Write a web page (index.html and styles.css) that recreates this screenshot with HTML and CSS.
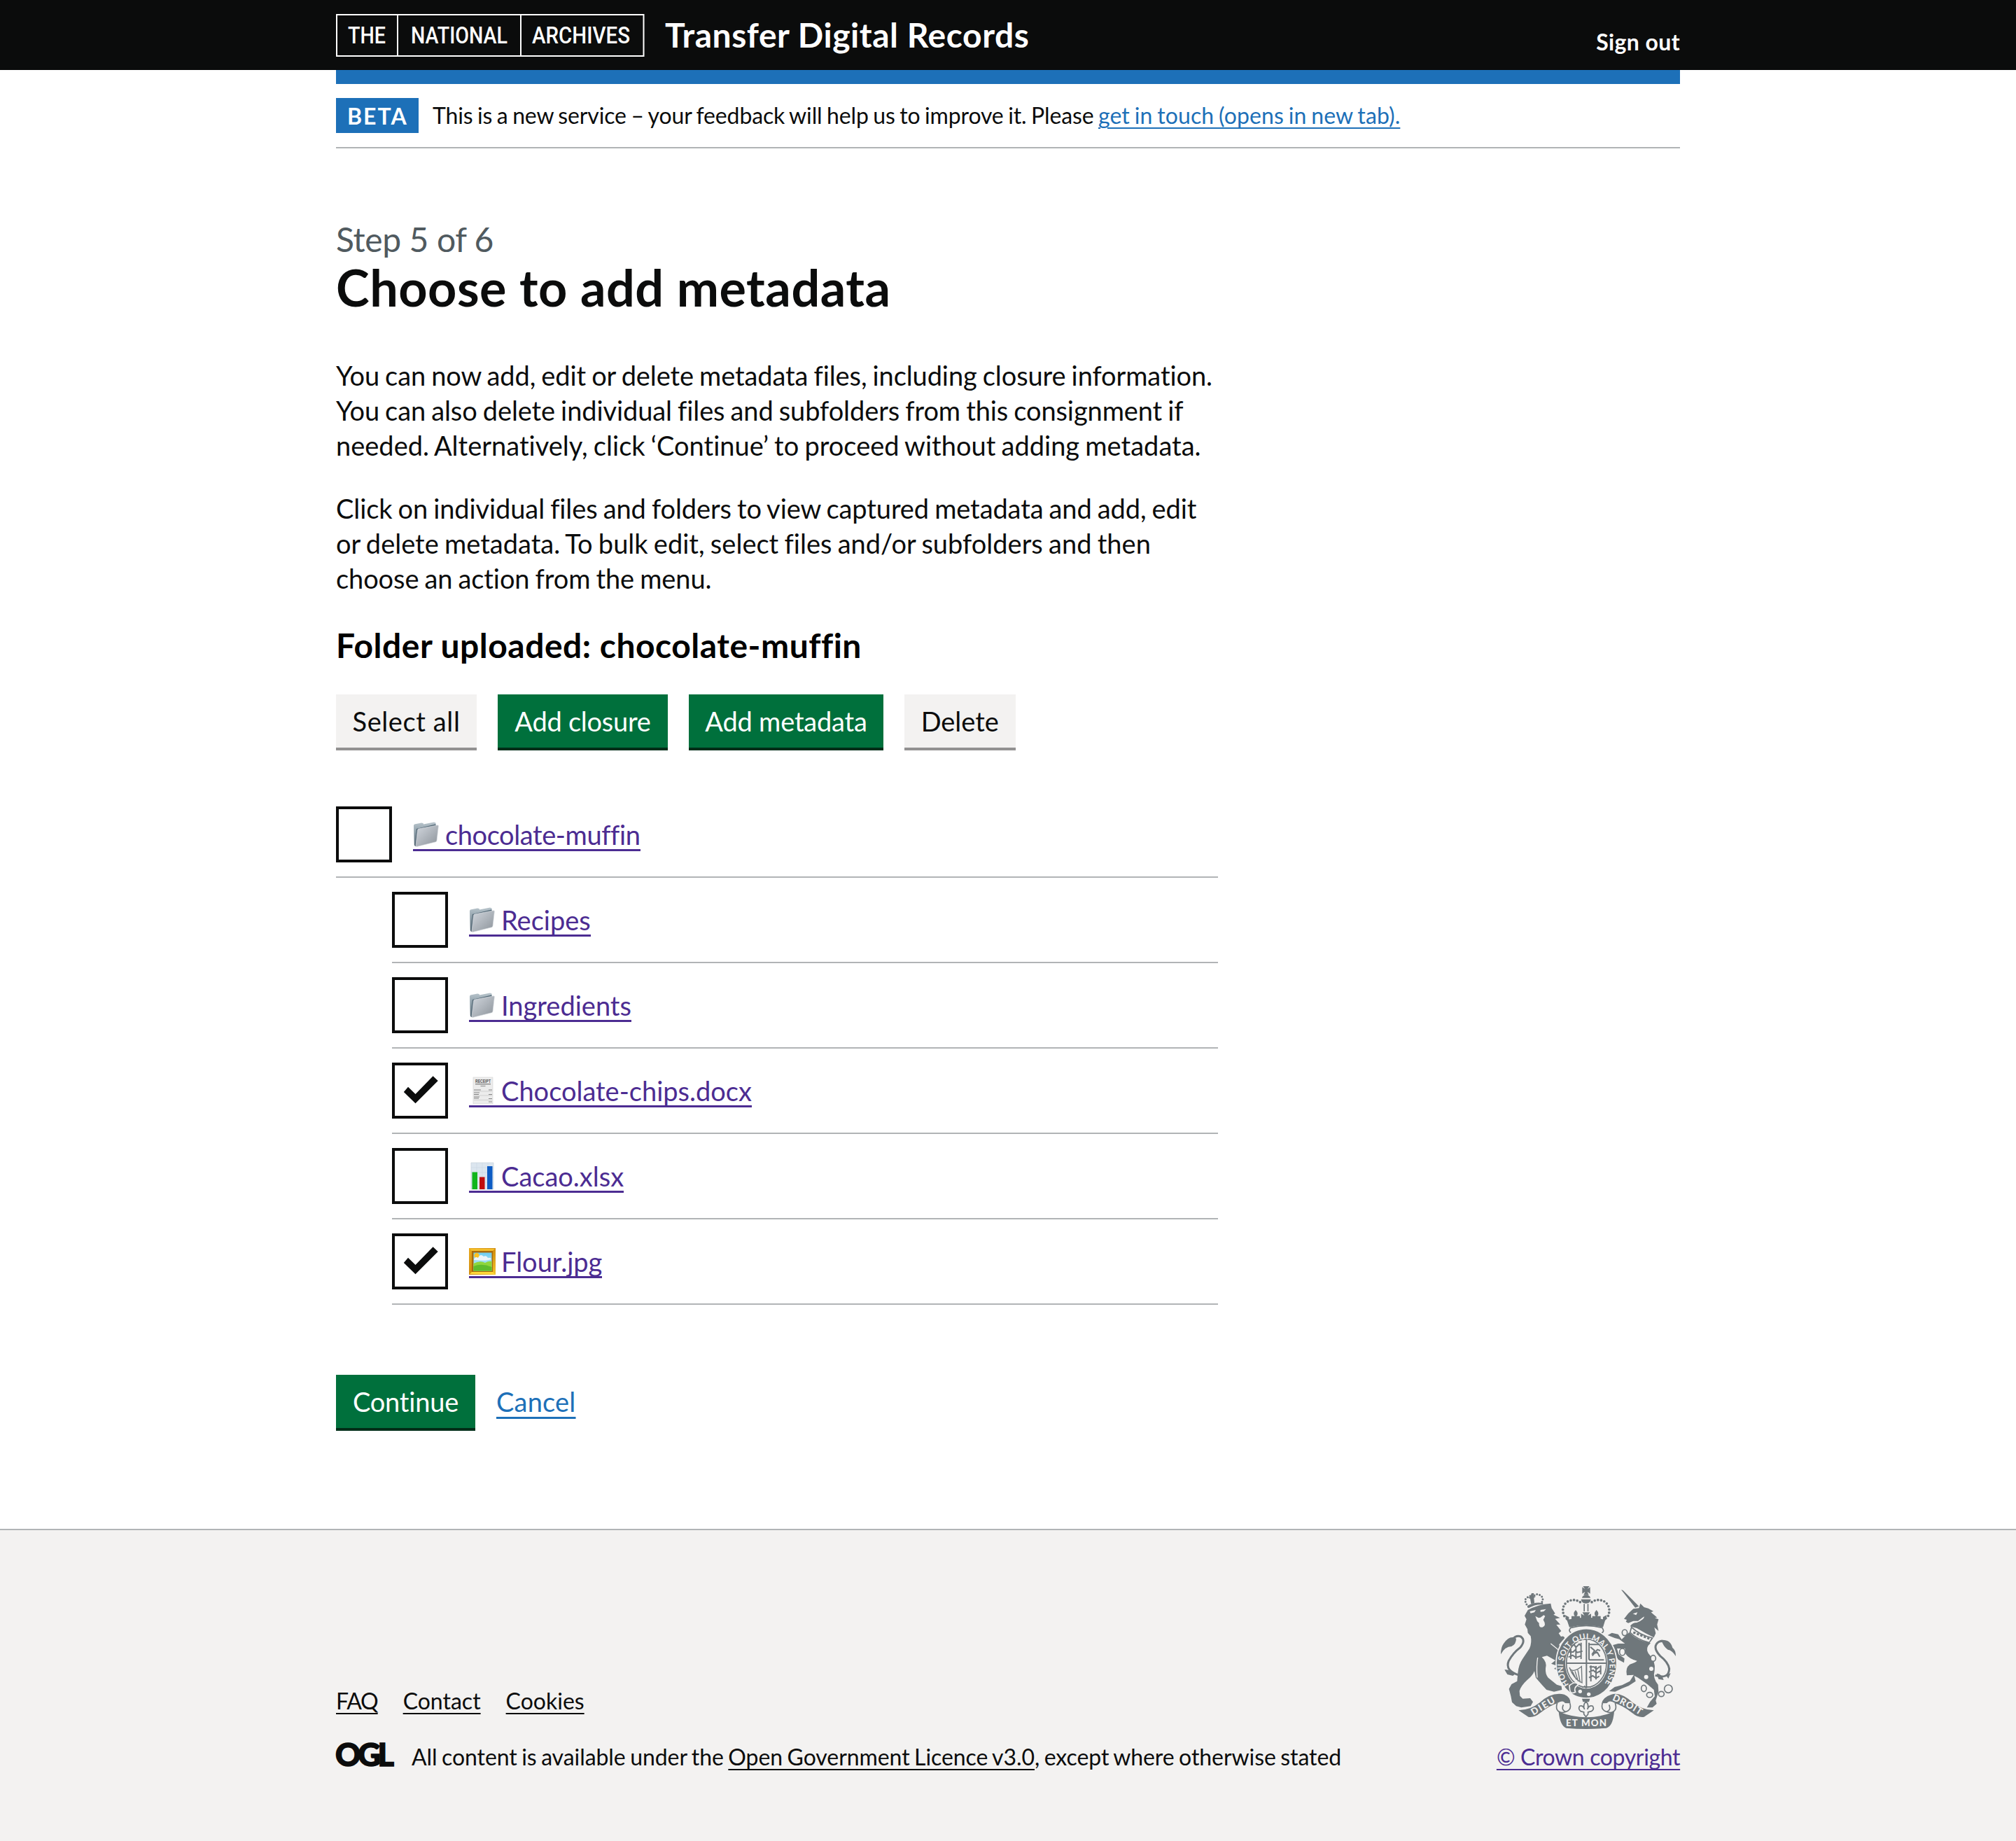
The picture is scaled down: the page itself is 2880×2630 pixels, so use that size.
FILE: index.html
```html
<!DOCTYPE html>
<html lang="en">
<head>
<meta charset="utf-8">
<title>Choose to add metadata – Transfer Digital Records</title>
<link rel="stylesheet" href="styles.css">
</head>
<body>
<svg class="sprite" aria-hidden="true">
  <defs>
    <linearGradient id="folder-front" x1="0" y1="0" x2="1" y2="1"><stop offset="0" stop-color="#d3d8df"/><stop offset="1" stop-color="#8b9299"/></linearGradient>
    <linearGradient id="folder-back" x1="0" y1="0" x2="0" y2="1"><stop offset="0" stop-color="#b9c5cc"/><stop offset=".4" stop-color="#8fa0aa"/><stop offset="1" stop-color="#4d5f6c"/></linearGradient>
    <linearGradient id="sky" x1="0" y1="0" x2="0" y2="1"><stop offset="0" stop-color="#6fcdf0"/><stop offset="1" stop-color="#c9effa"/></linearGradient>
    <linearGradient id="gold" x1="0" y1="0" x2="1" y2="1"><stop offset="0" stop-color="#e9a91d"/><stop offset=".5" stop-color="#d08d10"/><stop offset="1" stop-color="#f4c52b"/></linearGradient>
    <symbol id="icon-folder" viewBox="0 0 38 40">
      <path d="M1 7 L2 5.500 L12 3.500 L14.500 4 L15 5.500 L30 2.500 L32.500 3.500 L33 8 L5 36 L3 37 L1.800 35 Z" fill="url(#folder-back)"/>
      <path d="M5 12 L32 5.500 L33 8 L8 36 L3 37 Z" fill="#4f6472"/>
      <path d="M6.500 13.500 Q6.700 12.300 8 12 L35 6.800 Q36.600 6.600 36.400 8.200 L34 29 Q33.800 30.300 32.500 30.700 L5.500 37.500 Q3.800 37.800 4 36 Z" fill="url(#folder-front)" stroke="#dfe3e8" stroke-width=".6"/>
    </symbol>
    <symbol id="icon-receipt" viewBox="0 0 38 40">
      <path d="M6 1 H34 V39 H6 Z" fill="#ececec" stroke="#d9d9d9" stroke-width=".7"/>
      <text x="20" y="8.800" text-anchor="middle" textLength="22" lengthAdjust="spacingAndGlyphs" class="receipt-title">RECEIPT</text>
      <path d="M9 10.700 H31" stroke="#777" stroke-width="1.200"/>
      <path d="M16.500 13.500 H23.500" stroke="#999" stroke-width="1.300"/>
      <path d="M7 19 H17 M28 19 H33 M7 23 H15 M7 25.500 H14 M28 25.500 H33 M7 29 H15 M7 31 H14 M28 31.500 H33 M28 36 H33" stroke="#858585" stroke-width="1.200"/>
      <path d="M7 21 H33 M7 27 H33 M7 33.500 H33" stroke="#c4c4c4" stroke-width=".7"/>
    </symbol>
    <symbol id="icon-chart" viewBox="0 0 38 40">
      <path d="M3 1 H35 V39 H3 Z" fill="#dce6ef" stroke="#c5d1db" stroke-width=".7"/>
      <path d="M3 8 H35 M3 15 H35 M3 22 H35 M3 29 H35 M11 1 V39 M19 1 V39 M27 1 V39" stroke="#ccd9e5" stroke-width=".7"/>
      <path d="M4.500 14.500 H12 V39 H4.500 Z" fill="#10b51c"/>
      <path d="M15 21.500 H22.500 V39 H15 Z" fill="#c00d0d"/>
      <path d="M26 6 H33.500 V39 H26 Z" fill="#0d5cc4"/>
    </symbol>
    <symbol id="icon-picture" viewBox="0 0 38 40">
      <path d="M0 1 H38 V39 H0 Z" fill="url(#gold)"/>
      <path d="M1 2 H37 L33 6 H5 Z" fill="#f3bd2a"/>
      <path d="M1 38 H37 L33 34 H5 Z" fill="#ffd83c"/>
      <path d="M4 5 H34 V35 H4 Z" fill="#a8690b"/>
      <path d="M6.500 7.500 H32.500 V33.500 H6.500 Z" fill="url(#sky)"/>
      <circle cx="11" cy="11.500" r="3.600" fill="#ffc21f"/>
      <path d="M7 17 Q9 12 13 15 Q16 8 21 13 Q25 11 27 15 Q31 14 32 17 Q25 20 7 18 Z" fill="#eef4f8"/>
      <path d="M6.500 23 Q16 18 23 22 Q28 19 32.500 20 V33.500 H6.500 Z" fill="#8fd63c"/>
      <path d="M6.500 27 Q18 22 32.500 28 V33.500 H6.500 Z" fill="#5ebc2c"/>
    </symbol>
  </defs>
</svg>

<header class="header">
  <div class="container header-inner">
    <div class="brand">
      <svg class="brand-logo" viewBox="0 0 441 61" role="img" aria-label="The National Archives">
        <path d="M1 1 H439.500 V60 H1 Z M88 1 V60 M264 1 V60" fill="none" stroke="#fff" stroke-width="2"/>
        <text x="17" y="42" textLength="54" lengthAdjust="spacingAndGlyphs">THE</text>
        <text x="107" y="42" textLength="138" lengthAdjust="spacingAndGlyphs">NATIONAL</text>
        <text x="280" y="42" textLength="140" lengthAdjust="spacingAndGlyphs">ARCHIVES</text>
      </svg>
      <span class="brand-title">Transfer Digital Records</span>
    </div>
    <a class="sign-out">Sign out</a>
  </div>
</header>

<div class="container">
  <div class="phase-banner">
    <strong class="tag">BETA</strong>
    <span class="phase-text">This is a new service – your feedback will help us to improve it. Please <a class="link phase-link">get in touch (opens in new tab).</a></span>
  </div>

  <main class="main">
    <span class="caption">Step 5 of 6</span>
    <h1 class="heading">Choose to add metadata</h1>
    <p class="body-text">You can now add, edit or delete metadata files, including closure information.<br>You can also delete individual files and subfolders from this consignment if<br><span class="loose">needed. Alternatively, click ‘Continue’ to proceed without adding metadata.</span></p>
    <p class="body-text">Click on individual files and folders to view captured metadata and add, edit<br><span class="loose">or delete metadata. To bulk edit, select files and/or subfolders and then</span><br>choose an action from the menu.</p>
    <h2 class="subheading">Folder uploaded: chocolate-muffin</h2>

    <div class="actions">
      <button class="button button-secondary select-all">Select all</button>
      <button class="button add-closure">Add closure</button>
      <button class="button add-metadata">Add metadata</button>
      <button class="button button-secondary delete">Delete</button>
    </div>

    <ul class="tree">
      <li class="row">
        <span class="checkbox"></span>
        <a class="file tight"><svg class="icon"><use href="#icon-folder"/></svg>chocolate-muffin</a>
      </li>
      <li class="row nested">
        <span class="checkbox"></span>
        <a class="file"><svg class="icon"><use href="#icon-folder"/></svg>Recipes</a>
      </li>
      <li class="row nested">
        <span class="checkbox"></span>
        <a class="file"><svg class="icon"><use href="#icon-folder"/></svg>Ingredients</a>
      </li>
      <li class="row nested">
        <span class="checkbox"><svg class="tick" viewBox="0 0 72 72"><path d="M12.800 38 L19 30.700 L29.500 41 L54.600 15.300 L61.700 22 L29.500 54.300 Z"/></svg></span>
        <a class="file"><svg class="icon"><use href="#icon-receipt"/></svg>Chocolate-chips.docx</a>
      </li>
      <li class="row nested">
        <span class="checkbox"></span>
        <a class="file"><svg class="icon"><use href="#icon-chart"/></svg>Cacao.xlsx</a>
      </li>
      <li class="row nested">
        <span class="checkbox"><svg class="tick" viewBox="0 0 72 72"><path d="M12.800 38 L19 30.700 L29.500 41 L54.600 15.300 L61.700 22 L29.500 54.300 Z"/></svg></span>
        <a class="file"><svg class="icon"><use href="#icon-picture"/></svg>Flour.jpg</a>
      </li>
    </ul>

    <div class="actions form-end">
      <button class="button continue">Continue</button>
      <a class="link cancel">Cancel</a>
    </div>
  </main>
</div>

<footer class="footer">
  <div class="container footer-inner">
    <div class="footer-meta">
      <div class="footer-links"><a class="link faq">FAQ</a><a class="link">Contact</a><a class="link">Cookies</a></div>
      <div class="licence">
        <svg class="ogl" viewBox="0 0 82 34" role="img" aria-label="OGL"><text x="-1" y="33" textLength="84" lengthAdjust="spacing">OGL</text></svg>
        <span class="licence-text">All content is available under the <a class="link">Open Government Licence v3.0</a>, except where otherwise stated</span>
      </div>
    </div>
    <div class="crown">
      <svg class="arms" viewBox="72 48 750 612" role="img" aria-label="Royal coat of arms">
        <!-- crown -->
        <g class="ink">
          <path d="M424 48 h28 l-9 12 12 -8 v28 l-12 -8 6 14 h-22 l6 -14 -12 8 v-28 l12 8 Z"/>
          <path d="M420 98 q2 -12 18 -12 q16 0 18 12 Z M416 104 h42 q-2 18 -21 18 q-19 0 -21 -18 Z M427 124 h5 v32 h-5 Z M443 124 h5 v32 h-5 Z"/>
          <path d="M355 192 Q438 172 520 192 L510 224 Q438 206 366 224 Z"/>
          <path d="M393 150 q14 14 4 26 h14 v16 h-36 v-16 h14 q-10 -12 4 -26 Z M482 150 q14 14 4 26 h14 v16 h-36 v-16 h14 q-10 -12 4 -26 Z M422 160 h32 l-9 14 14 -8 v28 h-43 v-28 l14 8 Z M348 172 l16 8 v20 l-12 -8 Z M526 172 l-16 8 v20 l12 -8 Z"/>
        </g>
        <path class="beads" d="M412 116 Q385 98 355 116 Q328 140 344 176 Q352 186 362 190 M462 116 Q490 98 520 116 Q546 140 532 176 Q524 186 514 190"/>
        <path class="outline" d="M372 226 Q438 208 506 226 Q520 244 500 250 Q438 232 376 250 Q358 240 372 226 Z"/>
        <!-- lion -->
        <path class="beads small" d="M190 136 Q166 106 186 96 Q200 84 208 96 Q222 76 240 86 Q260 98 246 120"/>
        <path class="ink" d="M186 132 Q216 114 252 120 L254 127 Q220 124 191 142 Z M204 78 l10 0 l-2 12 10 2 -8 6 2 22 -14 4 -4 -22 -8 -4 8 -6 Z"/>
        <path class="ink" d="M188 150 Q230 126 286 122 L290 142 L305 165 L298 170 L326 184 L305 188 L327 212 L310 213 L331 240 L320 250 L330 264 Q342 260 346 270 L322 298 L330 330 L345 365 L350 402 L325 410 L300 402 L315 390 L288 380 L306 366 L270 346 L248 352 Q272 375 264 400 Q262 425 275 440 L312 470 L332 476 L334 492 L300 500 L268 492 L248 470 L222 440 L216 412 Q208 432 185 450 Q158 475 152 497 L154 518 L166 530 L198 528 L210 544 L200 562 L160 568 L138 562 L120 545 L115 518 L107 488 L118 468 L142 455 L145 420 Q148 385 165 360 L195 315 Q206 290 200 262 L188 248 L186 232 L175 212 L182 190 L174 175 Z"/>
        <path class="paper" d="M196 156 l26 -6 -6 10 -16 4 Z M242 150 l24 -4 -10 10 -14 2 Z M220 176 l14 8 8 -2 14 -10 6 4 -8 16 q16 26 -4 32 q-16 2 -14 -18 l-8 -8 Z"/>
        <path class="paper-line" d="M286 294 Q318 318 342 344 M230 354 Q224 390 228 440"/>
        <path class="tail" d="M152 430 Q88 410 106 368 Q124 334 156 310 Q180 280 158 264 Q138 256 122 276"/>
        <path class="ink" d="M138 272 Q110 256 84 294 Q72 310 72 340 Q90 306 118 306 Q138 296 138 272 Z M88 406 Q108 402 134 424 L124 432 L100 426 Z"/>
        <!-- unicorn -->
        <path class="ink" d="M588 63 L596 66 L664 134 L648 140 Z"/>
        <path class="ink" d="M600 188 L618 165 L640 145 L664 142 L670 122 L686 138 L704 143 L726 155 L716 160 L742 182 L732 184 L748 190 L742 212 L748 240 L730 224 L736 250 L728 268 L690 248 L655 228 L626 220 Q636 204 655 204 Q690 190 686 178 L660 197 L640 197 L618 206 L608 200 L612 192 Z"/>
        <path class="paper" d="M638 166 l20 -6 -6 12 Z"/>
        <path class="ink" d="M622 246 Q660 284 714 292 Q690 312 704 335 Q738 370 731 410 Q722 440 746 470 L748 500 L736 538 L740 552 L722 568 L698 568 L712 543 L732 520 L728 492 L700 468 L660 440 L644 432 L650 455 L620 475 L590 487 L562 500 L536 498 L560 480 L592 472 L625 455 L642 428 L612 430 Q605 398 625 383 Q652 374 656 368 Q620 358 607 338 L604 315 L570 315 L577 340 L602 358 L600 376 L575 362 L560 335 L545 302 L575 294 L604 294 L580 275 L560 270 L530 258 L548 248 L575 254 L590 276 Z"/>
        <path class="outline" d="M632 224 Q668 258 722 270 L708 290 Q655 276 626 246 Z"/>
        <path class="collar" d="M640 246 L716 276"/>
        <path class="tail" d="M734 430 Q792 448 794 402 Q790 374 754 346 Q718 306 750 286 Q772 276 788 300"/>
        <path class="ink" d="M760 278 Q800 276 808 312 Q822 322 822 348 Q806 322 788 320 Q768 306 760 278 Z M740 422 Q764 424 770 450 L748 446 Z M780 430 L800 420 L790 444 Z"/>
        <path class="outline" d="M592 247 a11 13 0 1 0 22 0 a11 13 0 1 0 -22 0 M581 330 a12 15 0 1 0 24 0 a12 15 0 1 0 -24 0 M714 357 a11 13 0 1 0 22 0 a11 13 0 1 0 -22 0 M674 486 a11 14 0 1 0 22 0 a11 14 0 1 0 -22 0 M697 514 a13 11 0 1 0 26 0 a13 11 0 1 0 -26 0 M748 510 a12 11 0 1 0 24 0 a12 11 0 1 0 -24 0 M773 488 a17 17 0 1 0 34 0 a17 17 0 1 0 -34 0"/>
        <path class="paper" d="M708 402 a9 9 0 1 0 18 0 a9 9 0 1 0 -18 0 M686 437 a9 9 0 1 0 18 0 a9 9 0 1 0 -18 0"/>
        <!-- garter and shield -->
        <ellipse class="garter" cx="439" cy="379" rx="130" ry="149"/>
        <ellipse class="paper" cx="439" cy="378" rx="91" ry="109"/>
        <ellipse class="outline" cx="439" cy="378" rx="86" ry="103"/>
        <path class="quarters" d="M439 272 V484 M352 378 H526"/>
        <path class="charges" d="M372 306 l14 -8 8 12 14 -14 10 10 M364 330 h18 l8 -8 10 10 22 -6 M362 352 l18 -8 14 10 24 -8 M372 318 v42 M394 304 v56 M416 290 v70 M450 298 h42 M450 364 h64 M456 308 l18 16 -8 12 20 -4 10 18 M464 346 l22 -26 12 4 M450 290 v74 M452 394 h20 l10 10 14 -12 M450 416 l18 -8 14 12 18 -10 M450 440 l16 -8 14 10 14 -8 M458 388 v68 M480 390 v58 M500 388 v38"/>
        <path class="harp" d="M366 396 Q376 424 418 392 L420 462 Q384 446 366 396 Z M378 412 L396 448 M390 412 L404 456 M402 406 L412 460"/>
        <path class="harp" d="M420 480 h38 M430 474 l8 12"/>
        <path id="garter-line" d="M364 470 A100 117 0 1 1 514 470" fill="none"/>
        <text class="garter-text"><textPath href="#garter-line" startOffset="0" textLength="500" lengthAdjust="spacing">HONI SOIT QUI MAL Y PENSE</textPath></text>
        <circle class="paper" cx="412" cy="499" r="8"/><circle class="paper" cx="449" cy="511" r="8"/>
        <path class="buckle" d="M366 474 Q392 452 404 470 Q382 484 392 502 Q372 512 368 494 Z"/>
        <!-- fleur-de-lis -->
        <path class="ink" d="M420 530 h34 l-4 14 h-26 Z"/>
        <path class="outline" d="M437 542 Q452 558 443 576 Q450 556 466 562 Q474 576 460 584 L446 588 V596 L437 608 L428 596 V588 L414 584 Q402 574 410 562 Q424 556 431 576 Q422 558 437 542 Z"/>
        <!-- scroll -->
        <path class="ink" d="M148 580 Q200 578 240 546 Q290 500 344 512 Q372 524 370 550 L352 556 Q340 530 314 550 Q280 560 240 592 Q216 612 190 608 Z M728 580 Q676 578 636 546 Q586 500 546 512 Q508 524 504 552 L522 556 Q536 530 562 550 Q596 560 636 592 Q660 612 686 608 Z M320 586 Q438 634 558 586 Q552 650 524 656 Q438 664 352 656 Q326 646 320 586 Z"/>
        <path class="outline" d="M314 548 Q302 584 334 590 Q380 584 368 550 M562 548 Q574 584 542 590 Q496 584 508 550 M340 556 Q330 580 350 586 M536 556 Q546 580 526 586"/>
        <path id="left-scroll" d="M212 602 Q262 572 320 538" fill="none"/>
        <path id="right-scroll" d="M548 536 Q610 562 672 604" fill="none"/>
        <text class="motto"><textPath href="#left-scroll" textLength="112">DIEU</textPath></text>
        <text class="motto"><textPath href="#right-scroll" textLength="136">DROIT</textPath></text>
        <text class="motto" x="351" y="649" textLength="174">ET MON</text>
      </svg>
      <a class="link crown-link">© Crown copyright</a>
    </div>
  </div>
</footer>
</body>
</html>
```
FILE: styles.css
```css
* { box-sizing: border-box; }
body {
  margin: 0;
  background: #fff;
  color: #0b0c0c;
  font-family: Lato, "Open Sans", sans-serif;
  font-size: 38px;
  line-height: 50px;
  font-variant-ligatures: none;
  white-space: nowrap;
}
.sprite { position: absolute; width: 0; height: 0; }
.container { width: 1920px; margin: 0 auto; }

/* Header */
.header { height: 100px; background: #0b0c0c; color: #fff; }
.header-inner { display: flex; justify-content: space-between; }
.brand { display: flex; gap: 29px; }
.brand-logo { width: 441px; height: 61px; margin-top: 20px; }
.brand-logo text { font: 500 34px Roboto, sans-serif; fill: #fff; }
.brand-title { padding-top: 20px; font-size: 48px; font-weight: 700; line-height: 60px; letter-spacing: .55px; }
.sign-out { padding-top: 40px; font-size: 32px; font-weight: 700; line-height: 40px; letter-spacing: .4px; }

/* Phase banner */
.phase-banner {
  display: flex;
  gap: 20px;
  padding: 20px 0;
  border-top: 20px solid #1d70b8;
  border-bottom: 2px solid #b1b4b6;
  font-size: 32px;
}
.tag { width: 118px; height: 50px; padding-left: 16px; background: #1d70b8; color: #fff; font-weight: 700; line-height: 51px; letter-spacing: 2px; }
.phase-text { height: 50px; word-spacing: -1.5px; letter-spacing: -.14px; }
.link { color: #1d70b8; text-decoration: underline; text-decoration-thickness: 2px; text-underline-offset: 6px; }
.phase-link { letter-spacing: .1px; text-underline-offset: 5px; }

/* Main */
.main { width: 1260px; padding-top: 100px; }
.caption { display: block; color: #505a5f; font-size: 48px; line-height: 60px; letter-spacing: -.4px; }
.heading { margin: 1px 0 63px; font-size: 72px; font-weight: 700; line-height: 75px; letter-spacing: .5px; }
.body-text { margin: 0 0 40px; word-spacing: -1.5px; letter-spacing: -.1px; }
.loose { letter-spacing: .01px; }
.subheading { margin: 41px 0 40px; color: #000; font-size: 48px; font-weight: 700; line-height: 60px; letter-spacing: .5px; }
.actions { display: flex; gap: 30px; }
.button {
  height: 76px;
  padding: 0;
  border: 0;
  background: #00703c;
  box-shadow: 0 4px 0 #002d18;
  color: #fff;
  font: inherit;
  line-height: 76px;
  text-align: center;
}
.button-secondary { background: #f3f2f1; box-shadow: 0 4px 0 #929191; color: #0b0c0c; }
.select-all { width: 201px; letter-spacing: .6px; }
.add-closure { width: 243px; letter-spacing: -.25px; }
.add-metadata { width: 278px; letter-spacing: -.2px; }
.delete { width: 158.500px; }
.continue { width: 199px; letter-spacing: -.2px; }

/* File tree */
.tree { margin: 84px 0 100px; padding: 0; list-style: none; }
.row { display: flex; gap: 30px; align-items: flex-start; height: 122px; padding-top: 20px; border-bottom: 2px solid #b1b4b6; }
.row:first-child { height: 102px; padding-top: 0; }
.nested { margin-left: 80px; }
.checkbox { width: 80px; height: 80px; border: 4px solid #0b0c0c; }
.tick { display: block; width: 72px; height: 72px; fill: #0b0c0c; }
.file { display: flex; margin-top: 19px; border-bottom: 3px solid #4c2c92; color: #4c2c92; line-height: 42px; }
.tight { letter-spacing: -.4px; }
.icon { width: 38px; height: 40px; margin: 1px 8px 0 0; }
.receipt-title { font: 700 6.5px "Liberation Sans", sans-serif; fill: #555; }
.cancel { line-height: 76px; text-decoration-thickness: 3px; text-underline-offset: 7px; letter-spacing: .2px; }

/* Footer */
.footer { height: 446px; margin-top: 144px; padding-top: 80px; border-top: 2px solid #b1b4b6; background: #f3f2f1; font-size: 32px; line-height: 40px; }
.footer-inner { display: flex; justify-content: space-between; align-items: flex-end; }
.footer .link { color: #0b0c0c; text-decoration-skip-ink: none; text-underline-offset: 5px; }
.footer .crown-link { color: #4c2c92; letter-spacing: -.36px; }
.footer-links { display: flex; gap: 36px; }
.faq { letter-spacing: -1.1px; }
.footer-meta { display: grid; gap: 40px; }
.licence { display: flex; gap: 26px; }
.licence-text { letter-spacing: -.07px; word-spacing: -1.6px; }
.ogl { width: 82px; height: 34px; margin-top: 0; overflow: visible; }
.ogl text { font: 900 45px Lato, sans-serif; fill: #0b0c0c; stroke: #0b0c0c; stroke-width: 1.5px; }
.crown { display: flex; flex-direction: column; align-items: center; gap: 20px; width: 262px; }
.arms { width: 250px; height: 204px; }
.ink { fill: #6f777b; }
.paper { fill: #f3f2f1; }
.outline { fill: #f3f2f1; stroke: #6f777b; stroke-width: 5px; }
.beads { fill: none; stroke: #6f777b; stroke-width: 11px; stroke-linecap: round; stroke-dasharray: 0 14px; }
.small { stroke-width: 9px; stroke-dasharray: 0 12px; }
.paper-line { fill: none; stroke: #f3f2f1; stroke-width: 4px; }
.tail { fill: none; stroke: #6f777b; stroke-width: 9px; }
.collar { fill: none; stroke: #6f777b; stroke-width: 9px; stroke-dasharray: 10px 6px; }
.garter { fill: #6f777b; stroke: #f3f2f1; stroke-width: 5px; }
.quarters { fill: none; stroke: #6f777b; stroke-width: 6px; }
.charges { fill: none; stroke: #6f777b; stroke-width: 6px; }
.harp { fill: none; stroke: #6f777b; stroke-width: 4px; }
.garter-text { font: 700 34px Lato, sans-serif; fill: #f3f2f1; }
.buckle { fill: #6f777b; stroke: #f3f2f1; stroke-width: 5px; }
.motto { font: 900 40px Lato, sans-serif; fill: #f3f2f1; }
```
